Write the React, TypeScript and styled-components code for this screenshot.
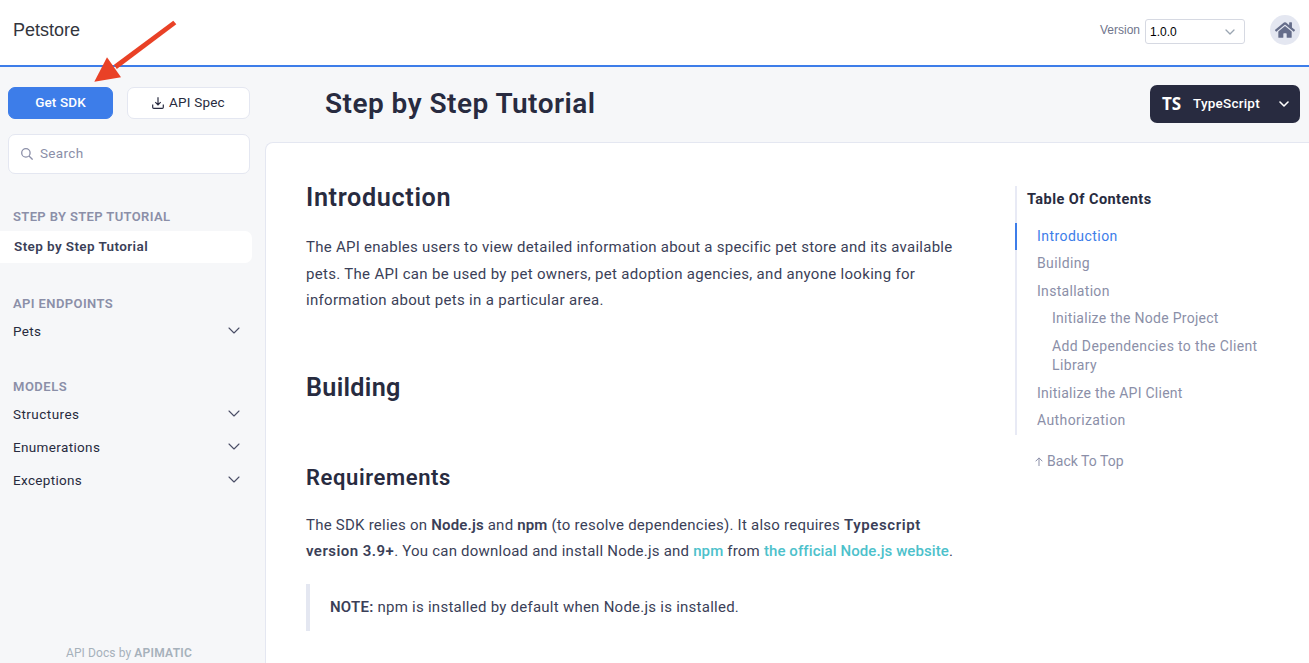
import React from 'react';
import styled, { createGlobalStyle } from 'styled-components';
import { FaHome } from 'react-icons/fa';

const GlobalStyle = createGlobalStyle`
  * { box-sizing: border-box; }
  html, body { margin: 0; padding: 0; }
  body {
    height: 663px;
    overflow: hidden;
    background: #f6f7f9;
    font-family: Roboto, 'Liberation Sans', sans-serif;
    color: #282b40;
    -webkit-font-smoothing: antialiased;
  }
  h1, h2, h3, p, ul { margin: 0; padding: 0; }
`;

const Page = styled.div`
  display: flex;
  flex-direction: column;
  height: 663px;
  overflow: hidden;
`;

const Header = styled.header`
  display: flex;
  align-items: flex-start;
  justify-content: space-between;
  flex: none;
  height: 67px;
  padding: 15px 9px 0 13px;
  background: #fff;
  border-bottom: 2px solid #3d7de9;
`;

const Brand = styled.div`
  padding-top: 4px;
  font: 18px/22px 'Liberation Sans', Arial, sans-serif;
  letter-spacing: -0.02px;
  color: #33353d;
`;

const HeaderTools = styled.div`
  display: flex;
  align-items: center;
  height: 30px;
`;

const VersionLabel = styled.span`
  margin-right: 5px;
  font: 12px/18px 'Liberation Sans', Arial, sans-serif;
  color: #70758c;
`;

const VersionSelect = styled.div`
  display: flex;
  align-items: center;
  justify-content: space-between;
  width: 100px;
  height: 25px;
  margin: 3px 25px 0 0;
  padding: 0 9px 0 4px;
  border: 1px solid #d6d9e2;
  border-radius: 3px;
  font: 12px/18px 'Liberation Sans', Arial, sans-serif;
  color: #000;
`;

const HomeButton = styled.div`
  display: flex;
  align-items: center;
  justify-content: center;
  width: 30px;
  height: 30px;
  border-radius: 50%;
  background: #e4e7f1;
  color: #656d8a;
`;

const Body = styled.div`
  display: flex;
  flex: 1;
  min-height: 0;
`;

const Sidebar = styled.aside`
  display: flex;
  flex-direction: column;
  flex: none;
  width: 265px;
  padding-top: 20px;
`;

const Actions = styled.div`
  display: flex;
  gap: 14px;
  padding-left: 8px;
`;

const Button = styled.div<{ $primary?: boolean; $w: number }>`
  display: flex;
  align-items: center;
  justify-content: center;
  gap: 5px;
  width: ${(p) => p.$w}px;
  height: 32px;
  padding-bottom: 2px;
  border: 1px solid ${(p) => (p.$primary ? '#3d7de9' : '#e4e7f1')};
  border-radius: 7px;
  background: ${(p) => (p.$primary ? '#3d7de9' : '#fff')};
  color: ${(p) => (p.$primary ? '#fff' : '#282b40')};
  font-size: 13.5px;
  font-weight: ${(p) => (p.$primary ? 500 : 400)};

  svg { margin-top: 2px; }
`;

const SearchBox = styled.div`
  display: flex;
  align-items: center;
  gap: 7px;
  width: 242px;
  height: 40px;
  margin: 15px 0 0 8px;
  padding: 0 0 2px 12px;
  border: 1px solid #e4e7f1;
  border-radius: 7px;
  background: #fff;
  color: #8b8fa8;
  font-size: 13.5px;

  svg { margin-top: 2px; }
`;

const Group = styled.section<{ $top: number }>`
  margin-top: ${(p) => p.$top}px;
`;

const GroupTitle = styled.div`
  padding-left: 13px;
  font-size: 13px;
  line-height: 17px;
  font-weight: 600;
  color: #8b8fa8;
`;

const ActiveItem = styled.div`
  width: 252px;
  height: 32px;
  margin-top: 6px;
  padding-left: 14px;
  border-radius: 0 7px 7px 0;
  background: #fff;
  font-size: 13.5px;
  line-height: 31px;
  font-weight: 600;
  color: #3b3f58;
`;

const NavItem = styled.div`
  display: flex;
  align-items: center;
  justify-content: space-between;
  width: 240px;
  height: 33px;
  padding: 0 0 2px 13px;
  font-size: 13.5px;
`;

const NavList = styled.div`
  padding-top: 3px;
`;

const Credit = styled.div`
  margin-top: auto;
  padding: 0 0 2px 66px;
  font-size: 12px;
  line-height: 16px;
  color: #a6b1bb;
  white-space: nowrap;
`;

const Main = styled.main`
  display: flex;
  flex-direction: column;
  flex: 1;
  min-width: 0;
`;

const TitleBar = styled.div`
  display: flex;
  justify-content: space-between;
  flex: none;
  height: 75px;
  padding: 18px 9px 0 60px;
`;

const Title = styled.h1`
  font-size: 28px;
  line-height: 38px;
  font-weight: 600;
`;

const LanguagePicker = styled.div`
  display: flex;
  align-items: center;
  width: 150px;
  height: 38px;
  padding: 0 11px 0 12px;
  border-radius: 7px;
  background: #282b40;
  color: #fff;
  font-size: 13.5px;
  font-weight: 500;

  svg { margin-left: auto; }
`;

const LanguageName = styled.span`
  padding-bottom: 2px;
  letter-spacing: 0.22px;
`;

const LanguageMark = styled.span`
  width: 31px;
  font: bold 17px/20px 'Noto Sans', sans-serif;
`;

const Panel = styled.div`
  display: flex;
  flex: 1;
  min-height: 0;
  border: 1px solid #e4e7f1;
  border-width: 1px 0 0 1px;
  border-radius: 8px 0 0 0;
  background: #fff;
`;

const Article = styled.article`
  flex: none;
  width: 749px;
  padding: 38px 0 0 40px;
`;

const Heading = styled.h2<{ $top?: number }>`
  margin-top: ${(p) => p.$top ?? 0}px;
  font-size: 25.2px;
  line-height: 34px;
  font-weight: 600;
`;

const SubHeading = styled.h3`
  margin-top: 58px;
  font-size: 22px;
  line-height: 30px;
  font-weight: 600;
`;

const Paragraph = styled.p<{ $top: number }>`
  margin-top: ${(p) => p.$top}px;
  font-size: 15px;
  line-height: 26.5px;
  color: #3b3f58;
`;

const Track = styled.span<{ $ls: number }>`
  letter-spacing: ${(p) => p.$ls}px;
  white-space: nowrap;
`;

const Line = styled(Track)`
  display: block;
`;

const Strong = styled.b<{ $ls?: number }>`
  font-weight: 600;
  letter-spacing: ${(p) => (p.$ls === undefined ? 'inherit' : `${p.$ls}px`)};
`;

const Link = styled.a`
  color: #4dc1cb;
  font-weight: 500;
  letter-spacing: 0.09px;
`;

const Note = styled.div`
  height: 47px;
  margin-top: 19px;
  padding-left: 20px;
  border-left: 4px solid #e4e7f1;
  font-size: 15px;
  line-height: 46px;
  color: #3b3f58;
`;

const Aside = styled.nav`
  flex: 1;
  padding-top: 43px;
`;

const Toc = styled.div`
  height: 249px;
  border-left: 2px solid #e8eaf5;
`;

const TocTitle = styled.div`
  height: 37px;
  padding: 4px 0 0 10px;
  font-size: 14.5px;
  line-height: 19px;
  font-weight: 700;
`;

const TocItem = styled.div<{ $active?: boolean; $nested?: boolean }>`
  margin-left: -2px;
  padding: 4px 0 4px ${(p) => (p.$nested ? 35 : 20)}px;
  border-left: 2px solid ${(p) => (p.$active ? '#3d7de9' : 'transparent')};
  font-size: 14px;
  line-height: 19.45px;
  color: ${(p) => (p.$active ? '#3d7de9' : '#8b8fa8')};
`;

const BackToTop = styled.div`
  display: flex;
  align-items: center;
  gap: 4px;
  margin-top: 16px;
  padding-left: 20px;
  font-size: 14px;
  line-height: 20px;
  color: #8b8fa8;
`;

const ArrowOverlay = styled.svg`
  position: absolute;
  left: 90px;
  top: 15px;
  pointer-events: none;
`;

const Chevron = ({ w, h, color, stroke }: { w: number; h: number; color: string; stroke: number }) => (
  <svg width={w} height={h} viewBox={`0 0 ${w} ${h}`} fill="none" stroke={color} strokeWidth={stroke} strokeLinecap="round" strokeLinejoin="round">
    <path d={`M1 1 L${w / 2} ${h - 1} L${w - 1} 1`} />
  </svg>
);

const DownloadIcon = () => (
  <svg width="12" height="12" viewBox="0 0 12 12" fill="none" stroke="#282b40" strokeWidth="1.2">
    <path d="M.7 7.500v2.700q0 1.100 1.100 1.100h8.400q1.100 0 1.100-1.100V7.500M6 .3v7.400M3.300 5.200 6 7.900l2.700-2.700" />
  </svg>
);

const SearchIcon = () => (
  <svg width="12" height="12" viewBox="0 0 12 12" fill="none" stroke="#8b8fa8" strokeWidth="1.3">
    <circle cx="4.900" cy="4.900" r="4.200" />
    <path d="M8 8l3.600 3.600" />
  </svg>
);

const UpIcon = () => (
  <svg width="8" height="9" viewBox="0 0 8 9" fill="none" stroke="#8b8fa8" strokeWidth="1">
    <path d="M4 9V.900M.6 4.300 4 .900l3.400 3.400" />
  </svg>
);

const models: [string, number][] = [['Structures', 0.45], ['Enumerations', 0.35], ['Exceptions', 0.33]];

const tocItems: { text: string[]; ls: number; active?: boolean; nested?: boolean }[] = [
  { text: ['Introduction'], ls: 0.45, active: true },
  { text: ['Building'], ls: 0.35 },
  { text: ['Installation'], ls: 0.3 },
  { text: ['Initialize the Node Project'], ls: 0.28, nested: true },
  { text: ['Add Dependencies to the Client', 'Library'], ls: 0.36, nested: true },
  { text: ['Initialize the API Client'], ls: 0.26 },
  { text: ['Authorization'], ls: 0.4 },
];

const NavRow = ({ label, ls }: { label: string; ls: number }) => (
  <NavItem>
    <Track $ls={ls}>{label}</Track>
    <Chevron w={12} h={7} color="#4a4e66" stroke={1.1} />
  </NavItem>
);

export default function App() {
  return (
    <Page>
      <GlobalStyle />
      <Header>
        <Brand>Petstore</Brand>
        <HeaderTools>
          <VersionLabel>Version</VersionLabel>
          <VersionSelect>
            1.0.0
            <Chevron w={10} h={6} color="#9aa5b1" stroke={1.3} />
          </VersionSelect>
          <HomeButton><FaHome size={20} /></HomeButton>
        </HeaderTools>
      </Header>
      <Body>
        <Sidebar>
          <Actions>
            <Button $primary $w={105}><Track $ls={0.12}>Get SDK</Track></Button>
            <Button $w={123}><DownloadIcon /><Track $ls={0.2}>API Spec</Track></Button>
          </Actions>
          <SearchBox><SearchIcon /><Track $ls={0.35}>Search</Track></SearchBox>
          <Group $top={34}>
            <GroupTitle><Track $ls={0.37}>STEP BY STEP TUTORIAL</Track></GroupTitle>
            <ActiveItem><Track $ls={0.4}>Step by Step Tutorial</Track></ActiveItem>
          </Group>
          <Group $top={32}>
            <GroupTitle><Track $ls={0.4}>API ENDPOINTS</Track></GroupTitle>
            <NavList><NavRow label="Pets" ls={0.3} /></NavList>
          </Group>
          <Group $top={30}>
            <GroupTitle><Track $ls={0.5}>MODELS</Track></GroupTitle>
            <NavList>{models.map(([m, ls]) => <NavRow key={m} label={m} ls={ls} />)}</NavList>
          </Group>
          <Credit><Track $ls={0.1}>API Docs by </Track><Strong $ls={0.25}>APIMATIC</Strong></Credit>
        </Sidebar>
        <Main>
          <TitleBar>
            <Title><Track $ls={0.47}>Step by Step Tutorial</Track></Title>
            <LanguagePicker>
              <LanguageMark>TS</LanguageMark>
              <LanguageName>TypeScript</LanguageName>
              <Chevron w={10} h={6} color="#fff" stroke={1.6} />
            </LanguagePicker>
          </TitleBar>
          <Panel>
            <Article>
              <Heading><Track $ls={0.65}>Introduction</Track></Heading>
              <Paragraph $top={19}>
                <Line $ls={0.263}>The API enables users to view detailed information about a specific pet store and its available</Line>
                <Line $ls={0.31}>pets. The API can be used by pet owners, pet adoption agencies, and anyone looking for</Line>
                <Line $ls={0.31}>information about pets in a particular area.</Line>
              </Paragraph>
              <Heading $top={57}><Track $ls={0.3}>Building</Track></Heading>
              <SubHeading><Track $ls={0.6}>Requirements</Track></SubHeading>
              <Paragraph $top={19}>
                <Line $ls={0.24}>
                  The SDK relies on <Strong $ls={0.15}>Node.js</Strong> and <Strong $ls={0.1}>npm</Strong> (to resolve dependencies). It also requires <Strong $ls={0.6}>Typescript</Strong>
                </Line>
                <Line $ls={0.22}>
                  <Strong $ls={0.45}>version 3.9+</Strong>. You can download and install Node.js and <Link>npm</Link> from <Link>the official Node.js website</Link>.
                </Line>
              </Paragraph>
              <Note><Track $ls={0.25}><Strong>NOTE:</Strong> npm is installed by default when Node.js is installed.</Track></Note>
            </Article>
            <Aside>
              <Toc>
                <TocTitle><Track $ls={0.45}>Table Of Contents</Track></TocTitle>
                {tocItems.map((item) => (
                  <TocItem key={item.text[0]} $active={item.active} $nested={item.nested}>
                    {item.text.map((t) => <Line key={t} $ls={item.ls}>{t}</Line>)}
                  </TocItem>
                ))}
              </Toc>
              <BackToTop><UpIcon /><Track $ls={0.03}>Back To Top</Track></BackToTop>
            </Aside>
          </Panel>
        </Main>
      </Body>
      <ArrowOverlay width="90" height="70" viewBox="0 0 90 70">
        <path d="M83.300 5.700 24 49.800l2.800 4.200L86.300 9.300z" fill="#e94126" />
        <path d="M4.300 66.700 17 42.300 31 62.300z" fill="#e94126" />
      </ArrowOverlay>
    </Page>
  );
}
